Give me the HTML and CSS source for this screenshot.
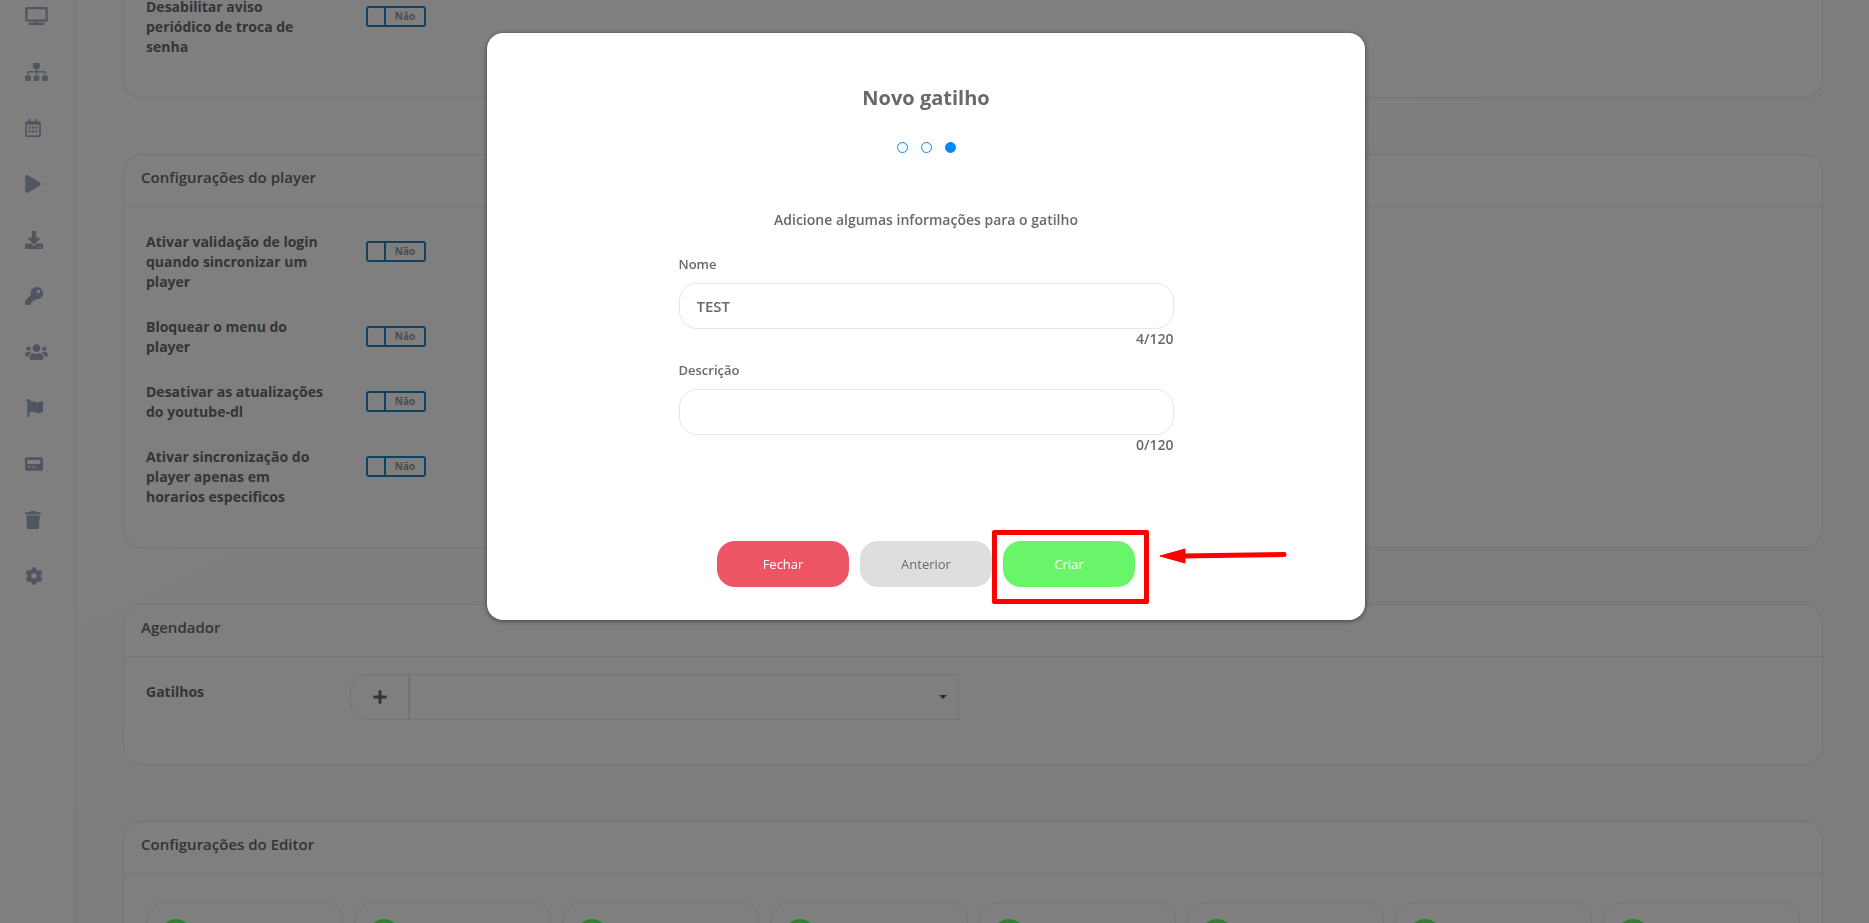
FILE: index.html
```html
<!DOCTYPE html>
<html lang="pt-BR">
<head>
  <meta charset="UTF-8" />
  <meta name="viewport" content="width=device-width, initial-scale=1.0"/>
  <title>Configurações</title>
  <link rel="stylesheet" href="styles.css">
</head>
<body>
  <div class="page">
    <!-- Sidebar -->
    <nav class="sidebar">
      <a href="#" aria-label="Monitores"><svg viewBox="0 0 640 512" width="23"><path d="M592 0H48A48 48 0 0 0 0 48v320a48 48 0 0 0 48 48h240v32H112a16 16 0 0 0-16 16v32a16 16 0 0 0 16 16h416a16 16 0 0 0 16-16v-32a16 16 0 0 0-16-16H352v-32h240a48 48 0 0 0 48-48V48a48 48 0 0 0-48-48zm-16 352H64V64h512z"/></svg></a>
      <a href="#" aria-label="Estrutura"><svg viewBox="0 0 640 512" width="23"><path d="M128 352H32c-17.700 0-32 14.300-32 32v96c0 17.700 14.300 32 32 32h96c17.700 0 32-14.300 32-32v-96c0-17.700-14.300-32-32-32zm-24-80h192v48h48v-48h192v48h48v-57.600c0-21.200-17.200-38.400-38.400-38.400H344v-64h40c17.700 0 32-14.300 32-32V32c0-17.700-14.300-32-32-32H256c-17.700 0-32 14.300-32 32v96c0 17.700 14.300 32 32 32h40v64H94.400C73.200 224 56 241.200 56 262.400V320h48v-48zm264 80h-96c-17.700 0-32 14.300-32 32v96c0 17.700 14.300 32 32 32h96c17.700 0 32-14.300 32-32v-96c0-17.700-14.300-32-32-32zm240 0h-96c-17.700 0-32 14.300-32 32v96c0 17.700 14.300 32 32 32h96c17.700 0 32-14.300 32-32v-96c0-17.700-14.300-32-32-32z"/></svg></a>
      <a href="#" aria-label="Agenda"><svg viewBox="0 0 448 512" width="16"><path fill-rule="evenodd" d="M400 64h-48V12c0-6.600-5.400-12-12-12h-40c-6.600 0-12 5.400-12 12v52H160V12c0-6.600-5.400-12-12-12h-40c-6.600 0-12 5.400-12 12v52H48C21.500 64 0 85.500 0 112v352c0 26.500 21.500 48 48 48h352c26.500 0 48-21.500 48-48V112c0-26.500-21.500-48-48-48zM48 160h352v304H48zM96 216h64v64H96zM192 216h64v64h-64zM288 216h64v64h-64zM96 320h64v64H96zM192 320h64v64h-64zM288 320h64v64h-64z"/></svg></a>
      <a href="#" aria-label="Player"><svg viewBox="0 0 448 512" width="16"><path d="M424.400 214.700L72.400 6.600C43.800-10.300 0 6.100 0 47.900V464c0 37.500 40.700 60.100 72.400 41.300l352-208c31.400-18.500 31.500-64.100 0-82.600z"/></svg></a>
      <a href="#" aria-label="Downloads"><svg viewBox="0 0 512 512" width="18"><path d="M216 0h80c13.300 0 24 10.700 24 24v168h87.700c17.800 0 26.700 21.500 14.100 34.100L269.700 378.300c-7.500 7.500-19.800 7.500-27.300 0L90.100 226.100c-12.600-12.600-3.700-34.100 14.100-34.100H192V24c0-13.300 10.700-24 24-24zm296 376v112c0 13.300-10.700 24-24 24H24c-13.300 0-24-10.700-24-24V376c0-13.300 10.700-24 24-24h146.700l49 49c20.100 20.100 52.500 20.100 72.600 0l49-49H488c13.300 0 24 10.700 24 24zm-124 88c0-11-9-20-20-20s-20 9-20 20 9 20 20 20 20-9 20-20zm64 0c0-11-9-20-20-20s-20 9-20 20 9 20 20 20 20-9 20-20z"/></svg></a>
      <a href="#" aria-label="Permissões"><svg viewBox="0 0 512 512" width="18"><path d="M512 176c0 97.200-78.800 176-176 176-11.200 0-22.200-1.100-32.800-3.100l-24 27A24 24 0 0 1 261.200 384H224v40c0 13.300-10.700 24-24 24h-40v40c0 13.300-10.700 24-24 24H24c-13.300 0-24-10.700-24-24v-78.100c0-6.400 2.500-12.500 7-17l161.800-161.800C163 213.800 160 195.300 160 176 160 78.800 238.800 0 336 0S512 78.500 512 176zM336 128c0 26.500 21.500 48 48 48s48-21.500 48-48-21.500-48-48-48-48 21.500-48 48z"/></svg></a>
      <a href="#" aria-label="Usuários"><svg viewBox="0 0 640 512" width="23"><path d="M96 224c35.300 0 64-28.700 64-64s-28.700-64-64-64-64 28.700-64 64 28.700 64 64 64zm448 0c35.300 0 64-28.700 64-64s-28.700-64-64-64-64 28.700-64 64 28.700 64 64 64zm32 32h-64c-17.600 0-33.500 7.100-45.100 18.600 40.300 22.100 68.900 62 75.100 109.400h66c17.700 0 32-14.300 32-32v-32c0-35.300-28.700-64-64-64zm-256 0c61.900 0 112-50.100 112-112S381.900 32 320 32 208 82.100 208 144s50.100 112 112 112zm76.800 32h-8.300c-20.800 10-43.900 16-68.500 16s-47.600-6-68.500-16h-8.300C179.600 288 128 339.600 128 403.200V432c0 26.500 21.500 48 48 48h288c26.500 0 48-21.500 48-48v-28.800c0-63.600-51.600-115.200-115.200-115.200zm-223.700-13.400C161.500 263.100 145.600 256 128 256H64c-35.300 0-64 28.700-64 64v32c0 17.700 14.300 32 32 32h65.900c6.300-47.400 34.900-87.300 75.200-109.400z"/></svg></a>
      <a href="#" aria-label="Campanhas"><svg viewBox="0 0 512 512" width="18"><path d="M349.600 98.800C306.400 98.800 270.800 64 212.600 64c-21.500 0-40.800 3.700-58.500 10.500A56 56 0 1 0 64 92.500V488c0 13.300 10.700 24 24 24h16c13.300 0 24-10.700 24-24v-94.400c28.300-12.100 63.600-22.100 114.400-22.100 43.200 0 78.800 34.800 137 34.800 49.900 0 89.700-16.900 126.100-41.800 6.500-4.500 10.500-11.900 10.500-19.800V96c0-23.400-24.200-38.800-45.400-29-34.300 15.900-76.600 31.800-121 31.800z"/></svg></a>
      <a href="#" aria-label="Painel"><svg viewBox="0 0 512 512" width="18"><path fill-rule="evenodd" d="M48 64h416c26.500 0 48 21.500 48 48v288c0 26.500-21.500 48-48 48H48c-26.500 0-48-21.500-48-48V112c0-26.500 21.500-48 48-48zM64 144v112h368V144zM76 328v24h84v-24zM192 328v24h100v-24z"/></svg></a>
      <a href="#" aria-label="Lixeira"><svg viewBox="0 0 448 512" width="16"><path d="M432 32H312l-9.400-18.700A24 24 0 0 0 281.100 0H166.800a23.700 23.700 0 0 0-21.400 13.300L136 32H16A16 16 0 0 0 0 48v32a16 16 0 0 0 16 16h416a16 16 0 0 0 16-16V48a16 16 0 0 0-16-16zM32 128l21.200 339a48 48 0 0 0 47.900 45h245.800a48 48 0 0 0 47.900-45L416 128z"/></svg></a>
      <a href="#" aria-label="Configurações"><svg viewBox="0 0 512 512" width="18"><path d="M487.400 315.700l-42.600-24.600c4.300-23.200 4.300-47 0-70.200l42.600-24.600c4.900-2.800 7.100-8.600 5.500-14-11.100-35.600-30-67.800-54.700-94.600-3.800-4.100-10-5.100-14.800-2.300L380.800 110c-17.900-15.400-38.500-27.300-60.800-35.100V25.800c0-5.600-3.900-10.500-9.400-11.700-36.700-8.200-74.300-7.800-109.200 0-5.500 1.200-9.400 6.100-9.400 11.700V75c-22.200 7.900-42.800 19.800-60.800 35.100L88.700 85.500c-4.900-2.800-11-1.900-14.800 2.300-24.700 26.700-43.600 58.900-54.700 94.600-1.700 5.400.6 11.200 5.500 14L67.300 221c-4.300 23.200-4.300 47 0 70.200l-42.600 24.600c-4.900 2.800-7.100 8.600-5.500 14 11.100 35.600 30 67.800 54.700 94.600 3.800 4.100 10 5.100 14.800 2.300l42.600-24.600c17.900 15.400 38.500 27.300 60.800 35.100v49.200c0 5.600 3.900 10.500 9.400 11.700 36.700 8.200 74.300 7.800 109.200 0 5.500-1.200 9.400-6.100 9.400-11.700v-49.200c22.200-7.900 42.800-19.800 60.800-35.100l42.600 24.600c4.900 2.800 11 1.900 14.800-2.300 24.700-26.700 43.600-58.900 54.700-94.600 1.500-5.500-.7-11.300-5.600-14.100zM256 336c-44.100 0-80-35.900-80-80s35.900-80 80-80 80 35.900 80 80-35.900 80-80 80z"/></svg></a>
    </nav>

    <main class="content">
      <section class="panel">
        <div class="panel-body">
          <div class="row">
            <label class="row-label" for="aviso">Desabilitar aviso periódico de troca de senha</label>
            <button class="toggle" id="aviso" type="button"><span class="handle"></span><span class="state">Não</span></button>
          </div>
        </div>
      </section>

      <section class="panel">
        <h2 class="panel-title">Configurações do player</h2>
        <div class="panel-body">
          <div class="row">
            <label class="row-label" for="login">Ativar validação de login quando sincronizar um player</label>
            <button class="toggle" id="login" type="button"><span class="handle"></span><span class="state">Não</span></button>
          </div>
          <div class="row">
            <label class="row-label" for="menu">Bloquear o menu do player</label>
            <button class="toggle" id="menu" type="button"><span class="handle"></span><span class="state">Não</span></button>
          </div>
          <div class="row">
            <label class="row-label" for="youtube">Desativar as atualizações do youtube-dl</label>
            <button class="toggle" id="youtube" type="button"><span class="handle"></span><span class="state">Não</span></button>
          </div>
          <div class="row">
            <label class="row-label" for="sync">Ativar sincronização do player apenas em horarios especificos</label>
            <button class="toggle" id="sync" type="button"><span class="handle"></span><span class="state">Não</span></button>
          </div>
        </div>
      </section>

      <section class="panel">
        <h2 class="panel-title">Agendador</h2>
        <div class="panel-body">
          <div class="row">
            <label class="row-label" for="gatilhos">Gatilhos</label>
            <div class="input-group">
              <button class="add-btn" type="button" aria-label="Adicionar"><svg viewBox="0 0 14 14" width="14"><path d="M5.500 1a.8.800 0 0 1 .8-.8h1.400a.8.800 0 0 1 .8.800v4.500H13a.8.800 0 0 1 .8.800v1.400a.8.800 0 0 1-.8.800H8.500V13a.8.800 0 0 1-.8.800H6.300a.8.800 0 0 1-.8-.8V8.500H1a.8.800 0 0 1-.8-.8V6.300a.8.800 0 0 1 .8-.8h4.500z"/></svg></button>
              <div class="select-wrap">
                <select id="gatilhos"><option></option></select>
              </div>
            </div>
          </div>
        </div>
      </section>

      <section class="panel">
        <h2 class="panel-title">Configurações do Editor</h2>
        <div class="tiles">
          <div class="tile"><span class="badge"></span></div>
          <div class="tile"><span class="badge"></span></div>
          <div class="tile"><span class="badge"></span></div>
          <div class="tile"><span class="badge"></span></div>
          <div class="tile"><span class="badge"></span></div>
          <div class="tile"><span class="badge"></span></div>
          <div class="tile"><span class="badge"></span></div>
          <div class="tile"><span class="badge"></span></div>
        </div>
      </section>
    </main>
  </div>

  <!-- Modal -->
  <div class="overlay">
    <form class="modal" role="dialog" aria-labelledby="modal-title">
      <h1 class="modal-title" id="modal-title">Novo gatilho</h1>
      <div class="steps">
        <span class="step"></span>
        <span class="step"></span>
        <span class="step active"></span>
      </div>
      <p class="modal-text">Adicione algumas informações para o gatilho</p>
      <div class="fields">
        <div class="field">
          <label for="nome">Nome</label>
          <input type="text" id="nome" value="TEST" maxlength="120">
          <span class="counter">4/120</span>
        </div>
        <div class="field">
          <label for="descricao">Descrição</label>
          <input type="text" id="descricao" maxlength="120">
          <span class="counter">0/120</span>
        </div>
      </div>
      <div class="actions">
        <button class="btn btn-close" type="button">Fechar</button>
        <button class="btn btn-prev" type="button">Anterior</button>
        <div class="highlight">
          <button class="btn btn-create" type="button">Criar</button>
          <span class="highlight-box"></span>
          <svg class="highlight-arrow" viewBox="0 0 128 16" width="128" height="16"><path d="M0 8L25 1v14z"/><path d="M22 8L124 6.500" stroke-width="5" stroke-linecap="round"/></svg>
        </div>
      </div>
    </form>
  </div>
</body>
</html>
```
FILE: styles.css
```css
:root {
  --line: #e4e6e8;
  --text: #676a6c;
  --blue: #1c84c6;
}

* { box-sizing: border-box; }

body {
  margin: 0;
  height: 100vh;
  overflow: hidden;
  font-family: "Open Sans", sans-serif;
  font-size: 14px;
  line-height: 20px;
  color: var(--text);
}

.page {
  display: flex;
  height: 100vh;
  overflow: hidden;
  background: linear-gradient(to bottom right, #fff 30%, #fafafe 50%);
}

/* Sidebar */
.sidebar {
  flex: none;
  width: 76px;
  border-right: 1px solid var(--line);
  background: #fff;
  padding: 7px 0 0 25px;
  display: flex;
  flex-direction: column;
  gap: 38px;
}

.sidebar a {
  flex: none;
  height: 18px;
  display: flex;
  align-items: center;
}

.sidebar svg {
  height: 18px;
  fill: #a0aabf;
}

/* Panels */
.content {
  flex: 1;
  margin-top: -3px;
  padding: 0 46px 0 47px;
}

.panel {
  background: #fff;
  border: 1px solid var(--line);
  border-radius: 18px;
  margin-bottom: 56px;
}

.panel:first-child {
  border-top: 0;
  border-radius: 0 0 18px 18px;
}

.panel:first-child .panel-body {
  padding-top: 0;
}

.panel-title {
  margin: 0;
  padding: 12px 17px 19px;
  border-bottom: 1px solid var(--line);
  font-size: 15px;
  font-weight: 600;
  line-height: 20px;
}

.panel-body {
  padding: 25px 22px 40px;
  display: flex;
  flex-direction: column;
  gap: 25px;
}

.row {
  display: flex;
  align-items: flex-start;
}

.row-label {
  width: 184px;
  font-weight: 700;
}

.toggle {
  margin: 9px 0 0 36px;
  padding: 0;
  width: 60px;
  height: 21px;
  display: flex;
  border: 2px solid var(--blue);
  border-radius: 3px;
  background: #fff;
  font-family: inherit;
  font-size: 10px;
  font-weight: 700;
  line-height: 16px;
  color: #999;
}

.toggle .handle {
  width: 18px;
  height: 17px;
  border-right: 2px solid var(--blue);
}

.toggle .state {
  flex: 1;
  text-align: center;
}

.input-group {
  display: flex;
  width: 100%;
  max-width: 609px;
  height: 46px;
  margin: -8px 0 4px 20px;
}

.add-btn {
  width: 59px;
  border: 1px solid var(--line);
  border-radius: 18px 0 0 18px;
  background: #fff;
  padding: 0;
  display: flex;
  align-items: center;
  justify-content: center;
}

.add-btn svg { fill: var(--text); }

.select-wrap {
  position: relative;
  flex: 1;
}

.select-wrap select {
  appearance: none;
  width: 100%;
  height: 46px;
  border: 1px solid var(--line);
  border-radius: 0;
  background: #fff;
}

.select-wrap::after {
  content: "";
  position: absolute;
  top: 21px;
  right: 12px;
  border: 4px solid transparent;
  border-top-color: #555;
  border-bottom: 0;
}

.tiles {
  display: grid;
  grid-template-columns: repeat(8, 1fr);
  gap: 11px;
  padding: 28px 22px;
}

.tile {
  height: 120px;
  border: 1px solid var(--line);
  border-radius: 18px;
  padding: 16px 13px;
}

.badge {
  display: block;
  width: 32px;
  height: 32px;
  border-radius: 50%;
  background: #5cff5c;
}

/* Modal */
.overlay {
  position: fixed;
  top: 0; left: 0; width: 100%; height: 100%;
  padding: 33px 17px 0 0;
  background: rgba(0,0,0,0.5);
}

.modal {
  width: 100%;
  max-width: 878px;
  margin: 0 auto;
  padding: 53px 0 33px;
  display: flex;
  flex-direction: column;
  align-items: center;
  background: #fff;
  border-radius: 16px;
  box-shadow: 0 1px 5px rgba(0,0,0,0.5);
}

.modal-title {
  margin: 0;
  font-size: 20px;
  font-weight: 700;
  line-height: 24px;
}

.steps {
  display: flex;
  gap: 13px;
  margin-top: 32px;
}

.step {
  width: 11px;
  height: 11px;
  border: 1px solid #0088ff;
  border-radius: 50%;
}

.step.active { background: #0088ff; }

.modal-text {
  margin: 57px 0 0;
  font-weight: 600;
}

.fields {
  width: 100%;
  max-width: 495px;
  margin-top: 24px;
}

.field {
  display: flex;
  flex-direction: column;
  margin-bottom: 11px;
  font-weight: 600;
}

.field label {
  font-size: 13px;
  margin-bottom: 9px;
}

.field input {
  height: 46px;
  padding: 0 17px;
  border: 1px solid #e5e6e7;
  border-radius: 18px;
  background: #fff;
  color: inherit;
  font-family: inherit;
  font-size: 15px;
  font-weight: 600;
}

.counter { align-self: flex-end; }

.actions {
  display: flex;
  gap: 11px;
  margin-top: 75px;
}

.btn {
  display: block;
  width: 132px;
  height: 46px;
  padding: 0;
  border: 0;
  border-radius: 18px;
  font-family: inherit;
  font-size: 13px;
  color: #fff;
}

.btn-close { background: #ed5565; }
.btn-prev { background: #dedede; color: var(--text); }
.btn-create { background: #69f569; }

.highlight { position: relative; }

.highlight-box {
  position: absolute;
  top: -11px;
  left: -11px;
  width: 157px;
  height: 74px;
  border: 5px solid #f00;
  border-radius: 2px;
}

.highlight-arrow {
  position: absolute;
  top: 7px;
  left: 157px;
  fill: #f00;
  stroke: #f00;
}
```
